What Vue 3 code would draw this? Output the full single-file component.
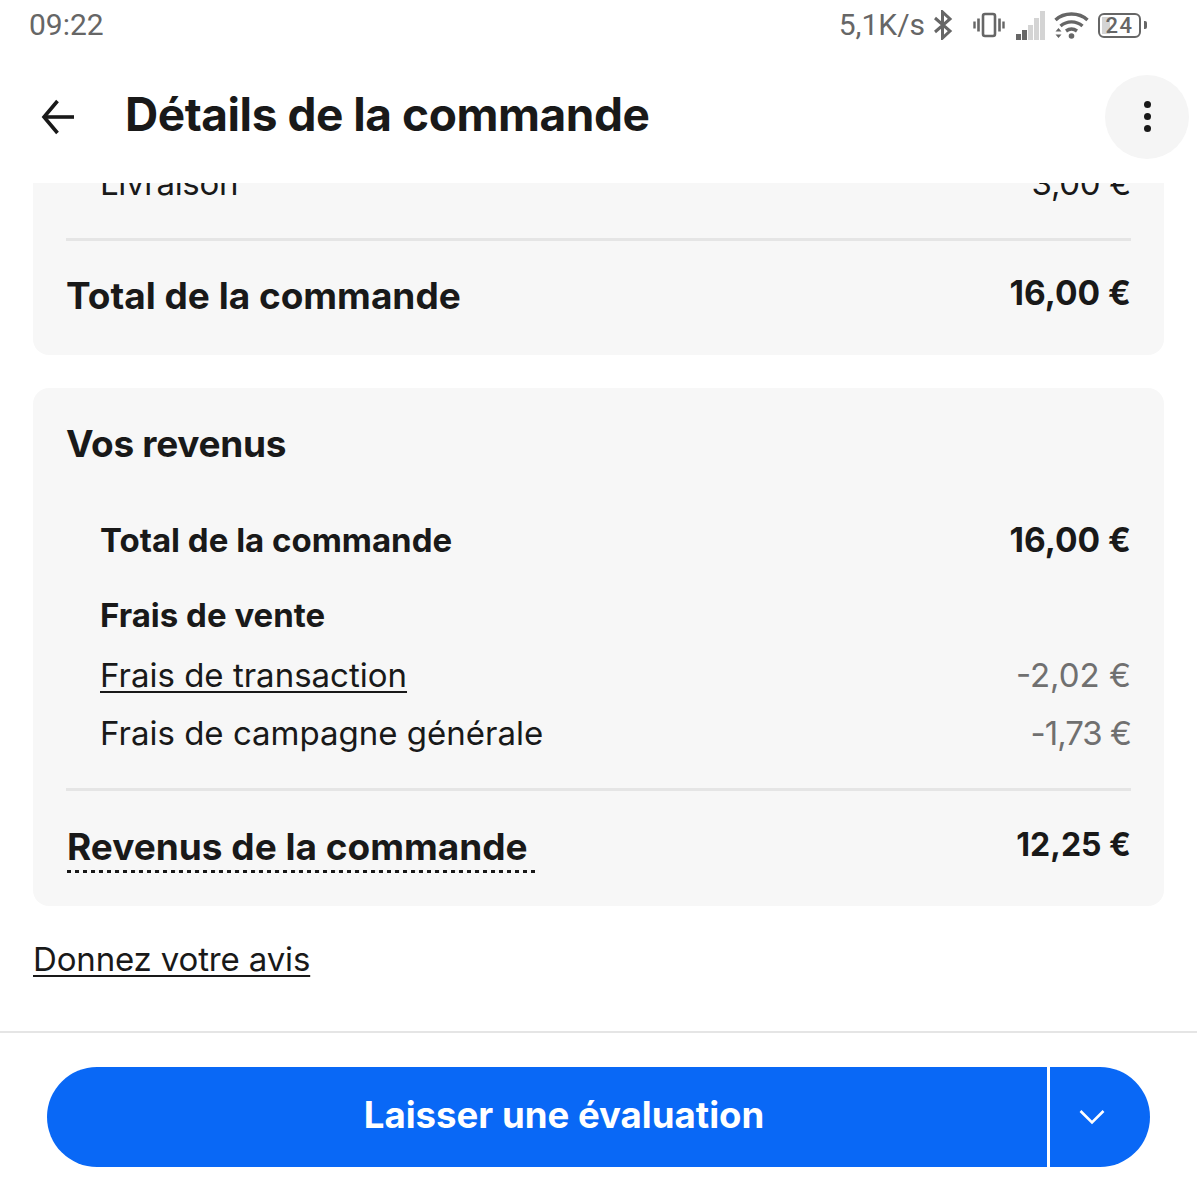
<template>
  <div class="screen">
    <!-- Barre d'état -->
    <div class="status-bar">
      <span class="time">09:22</span>
      <div class="status-icons">
        <span class="speed">5,1K/s</span>
        <svg class="ic-bt" width="20" height="30" viewBox="0 0 20 30" fill="none" stroke="#666" stroke-width="3">
          <path d="M2 8 L17 21 L9.5 28 V2 L17 9 L2 22" />
        </svg>
        <svg class="ic-vibrate" width="32" height="26" viewBox="0 0 32 26" fill="none" stroke="#666">
          <rect x="10" y="2" width="12" height="22" rx="2" stroke-width="2.6" />
          <path d="M5.5 6.5 V19.5 M26.5 6.5 V19.5" stroke-width="2.6" />
          <path d="M1.5 9.5 V16.5 M30.5 9.5 V16.5" stroke-width="2.4" />
        </svg>
        <svg class="ic-signal" width="30" height="29" viewBox="0 0 30 29">
          <rect x="0" y="23" width="5" height="6" fill="#666" />
          <rect x="6" y="19" width="5" height="10" fill="#666" />
          <rect x="12" y="14" width="5" height="15" fill="#d4d4d4" />
          <rect x="18" y="7" width="5" height="22" fill="#d4d4d4" />
          <rect x="24" y="0" width="5" height="29" fill="#d4d4d4" />
        </svg>
        <svg class="ic-wifi" width="35" height="28" viewBox="0 0 35 28" fill="none" stroke="#666" stroke-width="3.4">
          <path d="M1.5 9 C10 1 25 1 33.5 9" />
          <path d="M6.5 15 C13 9.5 22 9.5 28.5 15" />
          <path d="M12 20 C15.5 17.5 19.5 17.5 23 20" />
          <circle cx="17.5" cy="25" r="2.8" fill="#666" stroke="none" />
          <path d="M1.5 20.5 L4.5 17 L7.5 20.5 Z M1.5 23.5 L4.5 27 L7.5 23.5 Z" fill="#666" stroke="none" />
        </svg>
        <div class="battery">
          <div class="battery-body">
            <div class="battery-level"></div>
            <span class="battery-text">24</span>
          </div>
          <div class="battery-tip"></div>
        </div>
      </div>
    </div>

    <!-- En-tête -->
    <div class="header">
      <svg class="back" width="36" height="36" viewBox="0 0 36 36" fill="none" stroke="#191919" stroke-width="3.6">
        <path d="M33 18 H3" />
        <path d="M16.5 2 L3 18 L16.5 34" />
      </svg>
      <h1 class="title">Détails de la commande</h1>
      <button class="menu-btn">
        <span class="dot"></span>
        <span class="dot"></span>
        <span class="dot"></span>
      </button>
    </div>

    <!-- Contenu défilant -->
    <div class="scroll-area">
      <div class="scroll-content">
        <div class="card card-first">
          <div class="row row-delivery">
            <span class="row-label">Livraison</span>
            <span class="row-amount">3,00 €</span>
          </div>
          <div class="divider"></div>
          <div class="total-row">
            <span class="total-label">Total de la commande</span>
            <span class="total-amount">16,00 €</span>
          </div>
        </div>

        <div class="card card-income">
          <h2 class="card-title">Vos revenus</h2>
          <div class="row row-order">
            <span class="row-label strong">Total de la commande</span>
            <span class="row-amount strong">16,00 €</span>
          </div>
          <div class="row row-fees">
            <span class="row-label strong">Frais de vente</span>
          </div>
          <div class="row row-fee row-fee-first">
            <span class="row-label link">Frais de transaction</span>
            <span class="row-amount muted">-2,02 €</span>
          </div>
          <div class="row row-fee">
            <span class="row-label">Frais de campagne générale</span>
            <span class="row-amount muted tight">-1,73 €</span>
          </div>
          <div class="divider divider-income"></div>
          <div class="total-row total-income">
            <span class="total-label dotted">Revenus de la commande</span>
            <span class="total-amount small">12,25 €</span>
          </div>
        </div>

        <a class="feedback">Donnez votre avis</a>
      </div>
    </div>

    <!-- Barre d'action -->
    <div class="action-bar">
      <div class="split-button">
        <div class="split-main">Laisser une évaluation</div>
        <div class="split-toggle">
          <svg width="26" height="16" viewBox="0 0 26 16" fill="none" stroke="#fff" stroke-width="2.6">
            <path d="M1.5 2 L13 13.5 L24.5 2" />
          </svg>
        </div>
      </div>
    </div>
  </div>
</template>

<script setup>
</script>

<style>
html,
body {
  margin: 0;
  background: #ffffff;
}
</style>

<style scoped>
.screen {
  width: 1197px;
  height: 1200px;
  overflow: hidden;
  display: flex;
  flex-direction: column;
  background: #ffffff;
  color: #191919;
  font-family: Inter, "Liberation Sans", sans-serif;
}

.status-bar {
  height: 50px;
  flex: none;
  box-sizing: border-box;
  display: flex;
  justify-content: space-between;
  align-items: center;
  padding: 0 50px 2px 29px;
  color: #666666;
  font-family: Roboto, sans-serif;
  font-size: 30px;
}

.status-icons {
  display: flex;
  align-items: center;
  margin-top: 2px;
}

.speed {
  margin-right: 8px;
  margin-top: -2px;
}

.ic-vibrate {
  margin-left: 20px;
}

.ic-signal {
  margin-left: 11px;
}

.ic-wifi {
  margin-left: 8px;
}

.battery {
  display: flex;
  align-items: center;
  margin-left: 9px;
}

.battery-body {
  position: relative;
  width: 39px;
  height: 21px;
  border: 2px solid #666666;
  border-radius: 6px;
  display: flex;
  align-items: center;
  justify-content: center;
  overflow: hidden;
}

.battery-level {
  position: absolute;
  left: 2px;
  top: 2px;
  bottom: 2px;
  width: 8px;
  background: #d4d4d4;
}

.battery-text {
  position: relative;
  font-size: 22px;
  font-weight: 500;
  letter-spacing: 1.5px;
}

.battery-tip {
  width: 3px;
  height: 8px;
  margin-left: 3px;
  background: #666666;
  border-radius: 0 2px 2px 0;
}

.header {
  height: 133px;
  flex: none;
  display: flex;
  align-items: center;
  padding: 0 8px 0 41px;
}

.back {
  flex: none;
}

.title {
  flex: 1;
  margin: 0 0 5px 48px;
  font-size: 46px;
  font-weight: 700;
  letter-spacing: -0.45px;
}

.menu-btn {
  width: 84px;
  height: 84px;
  padding: 0;
  border: 0;
  border-radius: 50%;
  background: #f5f5f5;
  display: flex;
  flex-direction: column;
  align-items: center;
  justify-content: center;
  gap: 5px;
}

.dot {
  width: 7px;
  height: 7px;
  border-radius: 50%;
  background: #191919;
}

.scroll-area {
  height: 848px;
  flex: none;
  overflow: hidden;
  border-bottom: 2px solid #e5e5e5;
}

.scroll-content {
  margin-top: -40px;
  padding: 0 33px;
}

.card {
  background: #f7f7f7;
  border-radius: 16px;
  padding: 0 33px;
}

.card-first {
  height: 212px;
  box-sizing: border-box;
}

.card-income {
  margin-top: 33px;
  height: 518px;
  box-sizing: border-box;
}

.row {
  display: flex;
  justify-content: space-between;
  align-items: center;
  padding-left: 34px;
  font-size: 33px;
}

.row-delivery {
  height: 80px;
  letter-spacing: -0.3px;
}

.divider {
  height: 3px;
  margin-top: 15px;
  background: #e5e5e5;
}

.total-row {
  display: flex;
  justify-content: space-between;
  align-items: center;
  height: 108px;
}

.total-label {
  font-size: 37px;
  font-weight: 700;
}

.total-amount {
  font-size: 33.5px;
  font-weight: 700;
  margin-bottom: 4px;
}

.total-amount.small {
  font-size: 32px;
  margin-bottom: 6px;
}

.card-title {
  margin: 0;
  padding-top: 33px;
  height: 80px;
  box-sizing: border-box;
  font-size: 37px;
  font-weight: 700;
  letter-spacing: -0.3px;
  line-height: 46px;
}

.row-order {
  height: 64px;
  margin-top: 40px;
}

.row-order .row-amount {
  font-size: 33.5px;
}

.strong {
  font-weight: 700;
}

.row-fees {
  height: 50px;
  margin-top: 18px;
}

.row-fee {
  height: 58px;
}

.row-fee-first {
  margin-top: 6px;
}

.muted {
  color: #707070;
}

.tight {
  letter-spacing: -1px;
}

.link {
  text-decoration: underline;
  text-underline-offset: 4px;
  text-decoration-thickness: 2px;
}

.divider-income {
  margin-top: 26px;
}

.total-income {
  height: 112px;
}

.dotted {
  padding-right: 10px;
  padding-bottom: 4px;
  margin-top: 3px;
  margin-left: 1px;
  background: repeating-linear-gradient(to right, #191919 0 4px, transparent 4px 8px) left bottom / 100% 3px no-repeat;
}

.feedback {
  display: inline-block;
  margin-top: 31px;
  font-size: 33px;
  letter-spacing: -0.15px;
  line-height: 44px;
  text-decoration: underline;
  text-underline-offset: 4px;
  text-decoration-thickness: 2px;
}

.action-bar {
  flex: 1;
  padding: 34px 47px 0;
}

.split-button {
  display: flex;
  height: 100px;
  width: 1103px;
}

.split-main {
  flex: 1;
  display: flex;
  align-items: center;
  justify-content: center;
  padding: 0 0 5px 34px;
  background: #0968f6;
  border-radius: 50px 0 0 50px;
  color: #ffffff;
  font-size: 36.6px;
  font-weight: 700;
}

.split-toggle {
  width: 100px;
  margin-left: 3px;
  display: flex;
  align-items: center;
  justify-content: center;
  padding-right: 16px;
  box-sizing: border-box;
  background: #0968f6;
  border-radius: 0 50px 50px 0;
}
</style>
